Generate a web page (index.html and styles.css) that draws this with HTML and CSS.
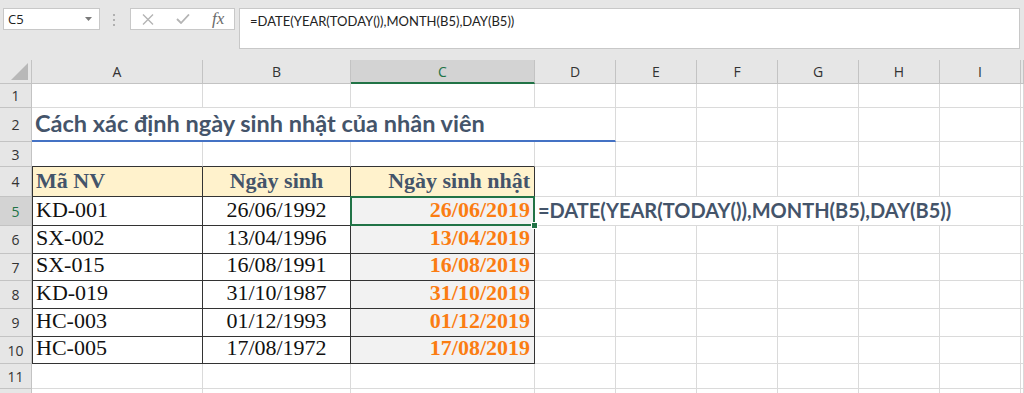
FILE: index.html
```html
<!DOCTYPE html>
<html lang="vi">
<head>
  <meta charset="UTF-8">
  <meta name="viewport" content="width=device-width, initial-scale=1.0">
  <title>Cách xác định ngày sinh nhật</title>
  <link rel="stylesheet" href="styles.css">
</head>
<body>
  <div class="toolbar">
    <div class="namebox">
      <span>C5</span>
      <svg width="7" height="4" viewBox="0 0 7 4"><path d="M0 0h7L3.5 4z" fill="#7a7a7a"/></svg>
    </div>
    <svg class="grip" width="3" height="12" viewBox="0 0 3 12">
      <rect x="0" y="0" width="2" height="2" fill="#b0b0b0"/>
      <rect x="0" y="5" width="2" height="2" fill="#b0b0b0"/>
      <rect x="0" y="10" width="2" height="2" fill="#b0b0b0"/>
    </svg>
    <div class="fx-tools">
      <svg class="tool-x" width="12" height="11" viewBox="0 0 12 11"><path d="M1 0.5l10 10M11 0.5l-10 10" stroke="#b4b4b4" stroke-width="1.4" fill="none"/></svg>
      <svg class="tool-ok" width="14" height="10" viewBox="0 0 14 10"><path d="M1 5l4 4 8-8.5" stroke="#b4b4b4" stroke-width="1.8" fill="none"/></svg>
      <span class="tool-fx">fx</span>
    </div>
    <div class="formula">=DATE(YEAR(TODAY()),MONTH(B5),DAY(B5))</div>
  </div>

  <div class="sheet">
    <!-- column headers -->
    <div class="corner"></div>
    <div class="col-head">A</div>
    <div class="col-head">B</div>
    <div class="col-head active">C</div>
    <div class="col-head">D</div>
    <div class="col-head">E</div>
    <div class="col-head">F</div>
    <div class="col-head">G</div>
    <div class="col-head">H</div>
    <div class="col-head">I</div>
    <div class="col-head"></div>

    <!-- row 1 -->
    <div class="row-head">1</div>
    <div></div><div></div><div></div><div></div><div></div><div></div><div></div><div></div><div></div><div></div>

    <!-- row 2 -->
    <div class="row-head">2</div>
    <div class="title">Cách xác định ngày sinh nhật của nhân viên</div>
    <div></div><div></div><div></div><div></div><div></div><div></div>

    <!-- row 3 -->
    <div class="row-head">3</div>
    <div class="top-edge"></div><div class="top-edge"></div><div class="top-edge"></div>
    <div></div><div></div><div></div><div></div><div></div><div></div><div></div>

    <!-- row 4 -->
    <div class="row-head">4</div>
    <div class="t th first">Mã NV</div>
    <div class="t th center">Ngày sinh</div>
    <div class="t th right">Ngày sinh nhật</div>
    <div></div><div></div><div></div><div></div><div></div><div></div><div></div>

    <!-- row 5 -->
    <div class="row-head active">5</div>
    <div class="t first">KD-001</div>
    <div class="t center">26/06/1992</div>
    <div class="t bday selected">26/06/2019</div>
    <div class="note">=DATE(YEAR(TODAY()),MONTH(B5),DAY(B5))</div>
    <div></div>

    <!-- row 6 -->
    <div class="row-head">6</div>
    <div class="t first">SX-002</div>
    <div class="t center">13/04/1996</div>
    <div class="t bday">13/04/2019</div>
    <div></div><div></div><div></div><div></div><div></div><div></div><div></div>

    <!-- row 7 -->
    <div class="row-head">7</div>
    <div class="t first">SX-015</div>
    <div class="t center">16/08/1991</div>
    <div class="t bday">16/08/2019</div>
    <div></div><div></div><div></div><div></div><div></div><div></div><div></div>

    <!-- row 8 -->
    <div class="row-head">8</div>
    <div class="t first">KD-019</div>
    <div class="t center">31/10/1987</div>
    <div class="t bday">31/10/2019</div>
    <div></div><div></div><div></div><div></div><div></div><div></div><div></div>

    <!-- row 9 -->
    <div class="row-head">9</div>
    <div class="t first">HC-003</div>
    <div class="t center">01/12/1993</div>
    <div class="t bday">01/12/2019</div>
    <div></div><div></div><div></div><div></div><div></div><div></div><div></div>

    <!-- row 10 -->
    <div class="row-head">10</div>
    <div class="t first">HC-005</div>
    <div class="t center">17/08/1972</div>
    <div class="t bday">17/08/2019</div>
    <div></div><div></div><div></div><div></div><div></div><div></div><div></div>

    <!-- row 11 -->
    <div class="row-head">11</div>
    <div></div><div></div><div></div><div></div><div></div><div></div><div></div><div></div><div></div><div></div>

    <!-- row 12, only its top edge shows -->
    <div class="row-head"></div>
    <div></div><div></div><div></div><div></div><div></div><div></div><div></div><div></div><div></div><div></div>
  </div>
</body>
</html>
```

FILE: styles.css
```css
body {
  margin: 0;
  font-family: "Open Sans", sans-serif;
  background: #fff;
  overflow: hidden;
}

/* formula bar */
.toolbar {
  height: 60px;
  box-sizing: border-box;
  padding-top: 8px;
  background: #e6e6e6;
  display: flex;
  align-items: flex-start;
}

.namebox {
  margin-left: 3px;
  width: 97px;
  height: 22px;
  box-sizing: border-box;
  padding: 0 7px 0 4px;
  background: #fff;
  border: 1px solid #c8c8c8;
  display: flex;
  align-items: center;
  justify-content: space-between;
  font-size: 13px;
  color: #222;
}

.grip {
  margin: 6px 0 0 13px;
}

.fx-tools {
  margin-left: 14px;
  width: 105px;
  height: 22px;
  box-sizing: border-box;
  background: #fff;
  border: 1px solid #c8c8c8;
  display: flex;
  align-items: center;
}

.tool-x {
  margin-left: 11px;
}

.tool-ok {
  margin-left: 22px;
}

.tool-fx {
  margin-left: 22px;
  font-family: "Liberation Serif", serif;
  font-style: italic;
  font-size: 17px;
  color: #6a6a6a;
}

.formula {
  flex: 1;
  margin: 0 4px 0 4px;
  height: 41px;
  box-sizing: border-box;
  padding: 4px 10px;
  background: #fff;
  border: 1px solid #c8c8c8;
  font-family: Lato, "Open Sans", sans-serif;
  font-size: 13px;
  color: #222;
}

/* grid */
.sheet {
  display: grid;
  grid-template-columns: 32px 171px 148px 184px 81px 81px 81px 81px 81px 81px 1fr;
  grid-template-rows: 24px 24px 34px 25px 30px 29px 28px 27px 28px 28px 27px 25px 24px;
}

.sheet > div {
  box-sizing: border-box;
  border-right: 1px solid #dadada;
  border-bottom: 1px solid #dadada;
  display: flex;
  align-items: flex-end;
  white-space: nowrap;
  min-width: 0;
}

.sheet > .corner {
  position: relative;
  background: #e6e6e6;
  border-color: #c3c3c3;
}

.corner::after {
  content: "";
  position: absolute;
  right: 3px;
  bottom: 3px;
  border-style: solid;
  border-width: 0 0 17px 17px;
  border-color: transparent transparent #b8b8b8 transparent;
}

.sheet > .col-head,
.sheet > .row-head {
  background: #e6e6e6;
  border-color: #c3c3c3;
  align-items: center;
  justify-content: center;
  font-size: 14px;
  color: #333;
}

.sheet > .col-head.active {
  background: #d3d3d3;
  color: #217346;
  border-bottom: 2px solid #217346;
}

.sheet > .row-head.active {
  background: #d3d3d3;
  color: #217346;
}

/* title */
.sheet > .title {
  grid-column: span 4;
  padding: 0 0 3px 3px;
  border-bottom: 2px solid #4472c4;
  font-family: Lato, "Open Sans", sans-serif;
  font-weight: bold;
  font-size: 23.5px;
  color: #44546a;
}

.sheet > .top-edge {
  border-bottom-color: #333;
}

/* table */
.sheet > .t {
  padding: 0 4px 2px 4px;
  border-right-color: #333;
  border-bottom-color: #333;
  font-family: "Liberation Serif", serif;
  font-size: 22px;
  color: #111;
}

.sheet > .first {
  box-shadow: inset 1px 0 0 #333;
}

.sheet > .th {
  background: #fff2cc;
  font-weight: bold;
  color: #44546a;
}

.center {
  justify-content: center;
}

.right {
  justify-content: flex-end;
}

.sheet > .bday {
  justify-content: flex-end;
  background: #f2f2f2;
  font-weight: bold;
  color: #fb7d12;
}

.selected {
  position: relative;
}

.selected::after {
  content: "";
  position: absolute;
  left: -1px;
  top: -1px;
  right: -1px;
  bottom: -1px;
  border: 2px solid #217346;
}

.selected::before {
  content: "";
  position: absolute;
  right: -4px;
  bottom: -4px;
  width: 5px;
  height: 5px;
  background: #217346;
  border: 1px solid #fff;
  z-index: 1;
}

.sheet > .note {
  grid-column: span 6;
  padding: 0 0 3px 3px;
  font-family: Lato, "Open Sans", sans-serif;
  font-weight: bold;
  font-size: 20px;
  color: #44546a;
}
```
